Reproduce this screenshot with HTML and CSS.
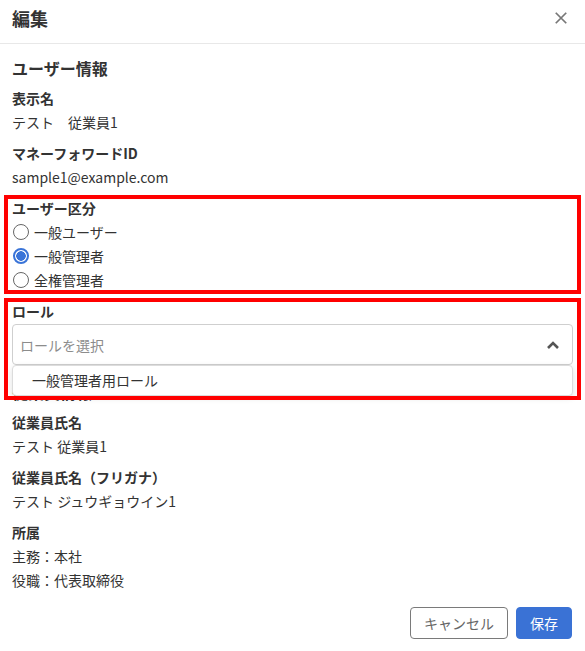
FILE: index.html
```html
<!DOCTYPE html>
<html lang="ja">
<head>
<meta charset="utf-8">
<link rel="stylesheet" href="styles.css">
</head>
<body>
<div class="dialog">
  <div class="header">
    <div class="title">編集</div>
    <svg class="close" width="16" height="16" viewBox="0 0 16 16"><path d="M2 2 L14 14 M14 2 L2 14" stroke="#777" stroke-width="2" fill="none"/></svg>
  </div>
  <div class="content">
    <div class="section-title">ユーザー情報</div>
    <div class="field">
      <div class="label">表示名</div>
      <div class="value">テスト　従業員1</div>
    </div>
    <div class="field">
      <div class="label">マネーフォワードID</div>
      <div class="value">sample1@example.com</div>
    </div>
    <div class="field">
      <div class="label">ユーザー区分</div>
      <div class="radio"><span class="circle"></span>一般ユーザー</div>
      <div class="radio"><span class="circle checked"></span>一般管理者</div>
      <div class="radio"><span class="circle"></span>全権管理者</div>
    </div>
    <div class="field role">
      <div class="label">ロール</div>
      <div class="select">
        <span class="placeholder">ロールを選択</span>
        <svg class="chev" width="14" height="10" viewBox="0 0 14 10"><path d="M2 8 L7 3 L12 8" stroke="#555" stroke-width="2.6" fill="none"/></svg>
        <div class="menu"><div class="option">一般管理者用ロール</div></div>
      </div>
    </div>
    <div class="section-title second">従業員情報</div>
    <div class="field">
      <div class="label">従業員氏名</div>
      <div class="value">テスト 従業員1</div>
    </div>
    <div class="field">
      <div class="label">従業員氏名（フリガナ）</div>
      <div class="value">テスト ジュウギョウイン1</div>
    </div>
    <div class="field">
      <div class="label">所属</div>
      <div class="value">主務：本社</div>
      <div class="value">役職：代表取締役</div>
    </div>
  </div>
  <div class="footer">
    <button class="btn cancel">キャンセル</button>
    <button class="btn save">保存</button>
  </div>
</div>
<div class="mark mark-1"></div>
<div class="mark mark-2"></div>
</body>
</html>
```
FILE: styles.css
```css
html, body {
  margin: 0;
  padding: 0;
  background: #fff;
}
body {
  font-family: "Noto Sans CJK JP", "Noto Sans", sans-serif;
  font-size: 14px;
  color: #333;
  position: relative;
  width: 585px;
  height: 651px;
  overflow: hidden;
}
.header {
  display: flex;
  justify-content: space-between;
  align-items: center;
  padding: 6px 17px 13px 12px;
  border-bottom: 1px solid #e8e8e8;
}
.title {
  font-size: 18px;
  font-weight: 700;
  line-height: 24px;
}
.close {
  display: block;
  width: 14px;
  height: 14px;
}
.content {
  padding: 12px 12px 0;
}
.section-title {
  font-size: 16px;
  font-weight: 700;
  line-height: 24px;
  margin-bottom: 6px;
}
.section-title.second {
  margin-top: 15px;
}
.field {
  margin-bottom: 7px;
}
.label {
  font-weight: 700;
  line-height: 24px;
}
.value {
  line-height: 24px;
}
.radio {
  display: flex;
  align-items: center;
  height: 24px;
  gap: 5px;
}
.circle {
  box-sizing: border-box;
  width: 16px;
  height: 16px;
  border-radius: 50%;
  border: 1.5px solid #666;
  margin-left: 1px;
  background: #fff;
}
.circle.checked {
  border: 2px solid #3a74d8;
  background: radial-gradient(circle, #3a74d8 0 4.5px, #fff 5px);
}
.select {
  position: relative;
  margin-top: 1px;
  box-sizing: border-box;
  height: 41px;
  border: 1px solid #cfcfcf;
  border-radius: 4px;
  display: flex;
  align-items: center;
  justify-content: space-between;
  padding: 0 12px 0 7px;
}
.placeholder {
  color: #8c8c8c;
}
.chev {
  display: block;
}
.menu {
  position: absolute;
  top: calc(100% + 1px);
  left: -1px;
  right: -1px;
  background: #fff;
  border: 1px solid #dcdcdc;
  border-radius: 4px;
  box-shadow: 0 2px 6px rgba(0, 0, 0, 0.12);
  z-index: 2;
}
.option {
  line-height: 29px;
  padding: 0 19px;
}
.footer {
  display: flex;
  justify-content: flex-end;
  gap: 8px;
  padding: 8px 13px 0 0;
}
.btn {
  font-family: inherit;
  font-size: 14px;
  height: 32px;
  border-radius: 4px;
  padding: 0 13px;
  cursor: pointer;
}
.cancel {
  background: #fff;
  border: 1px solid #7a7a7a;
  color: #666;
}
.save {
  background: #3a72d5;
  border: 1px solid #3a72d5;
  color: #fff;
}
.mark {
  position: absolute;
  border: 4px solid #ff0000;
  box-sizing: border-box;
  z-index: 5;
  pointer-events: none;
}
.mark-1 {
  left: 4px;
  top: 195px;
  width: 577px;
  height: 99px;
}
.mark-2 {
  left: 4px;
  top: 298px;
  width: 577px;
  height: 102px;
}
```
